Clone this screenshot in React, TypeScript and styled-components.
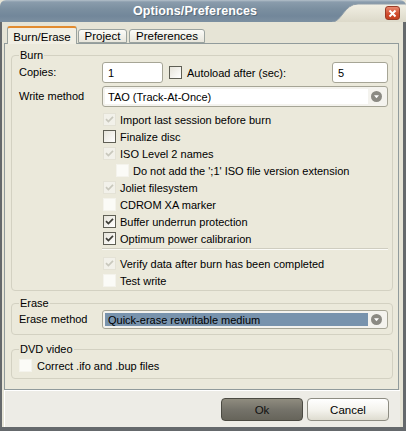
import styled, { createGlobalStyle } from "styled-components";

const GlobalStyle = createGlobalStyle`
  html, body {
    margin: 0;
    padding: 0;
    background: #e6e4d6;
  }
  body {
    font-family: "Liberation Sans", Arial, sans-serif;
    font-size: 11px;
    color: #000;
  }
  * {
    box-sizing: border-box;
  }
`;

const Window = styled.div`
  width: 406px;
  height: 431px;
  display: flex;
  flex-direction: column;
  overflow: hidden;
`;

const TitleBar = styled.div`
  position: relative;
  flex: none;
  height: 22px;
  border-radius: 6px 6px 0 0;
  background: linear-gradient(#b4c0ca 0, #8a9cac 2px, #7b8fa0 9px, #72879a 16px, #7c90a1 22px);
  display: flex;
  align-items: center;
  justify-content: center;
  padding-right: 16px;
  overflow: hidden;
`;

const TitleArt = styled.svg`
  position: absolute;
  top: 0;
  left: 0;
`;

const TitleText = styled.div`
  position: relative;
  font-weight: bold;
  font-size: 12.5px;
  color: #fff;
  text-shadow: 1px 1px 0 #5a6b78;
  letter-spacing: 0.1px;
`;

const CloseButton = styled.div`
  position: absolute;
  top: 6px;
  right: 6px;
  width: 15px;
  height: 14px;
  border-radius: 3px;
  border: 1px solid #9a3b26;
  background: linear-gradient(#e98a70, #d04a2c 60%, #c4401f);
  display: flex;
  align-items: center;
  justify-content: center;
`;

const Frame = styled.div`
  flex: 1;
  display: flex;
  flex-direction: column;
  background: #e6e4d6;
  border-left: 2px solid #65696c;
  border-right: 3px solid #65696c;
  border-bottom: 4px solid #65696c;
  padding: 4px 4px 0 2px;
`;

const TabStrip = styled.div`
  position: relative;
  z-index: 1;
  display: flex;
  align-items: flex-end;
  height: 18px;
  margin-bottom: -1px;
  padding-left: 3px;
`;

const Tab = styled.div<{ $active?: boolean; $w: number }>`
  width: ${(p) => p.$w}px;
  height: ${(p) => (p.$active ? 18 : 14)}px;
  margin-right: ${(p) => (p.$active ? 1 : 2)}px;
  margin-bottom: ${(p) => (p.$active ? 0 : 1)}px;
  display: flex;
  align-items: center;
  justify-content: center;
  padding-top: ${(p) => (p.$active ? 1 : 0)}px;
  border: 1px solid #9ba39f;
  border-bottom: ${(p) => (p.$active ? "none" : "1px solid #9ba39f")};
  border-top: ${(p) => (p.$active ? "2px solid #e28b2f" : "1px solid #9ba39f")};
  border-radius: 3px 3px 0 0;
  background: ${(p) =>
    p.$active ? "#f1efe4" : "linear-gradient(#fbfbf8, #e8e6dc)"};
  font-size: 11.5px;
`;

const Panel = styled.div`
  flex: 1;
  display: flex;
  flex-direction: column;
  gap: 6px;
  border: 1px solid #919b9c;
  background: #ebe9db;
  padding: 5px 5px 0 6px;
`;

const Group = styled.fieldset<{ $bottom?: number; $top?: number }>`
  margin: ${(p) => p.$top ?? 0}px 0 0 0;
  padding: 0 4px ${(p) => p.$bottom ?? 1}px 7px;
  border: 1px solid #d3d1c2;
  border-radius: 4px;
  min-width: 0;
`;

const Legend = styled.legend`
  padding: 0 1px;
  margin-left: 0;
  line-height: 13px;
`;

const FormRow = styled.div<{ $gap?: number }>`
  display: grid;
  grid-template-columns: 83px 1fr;
  align-items: center;
  margin-bottom: ${(p) => p.$gap ?? 0}px;
`;

const Label = styled.span`
  line-height: 13px;
`;

const Controls = styled.div`
  display: flex;
  align-items: center;
`;

const TextInput = styled.div<{ $w: number }>`
  width: ${(p) => p.$w}px;
  height: 21px;
  border: 1px solid #a6a596;
  border-radius: 3px;
  background: #fff;
  padding-left: 5px;
  display: flex;
  align-items: center;
`;

const InlineCheck = styled.label`
  display: flex;
  align-items: center;
  gap: 5px;
  margin-left: 6px;
`;

const Spacer = styled.div`
  flex: 1;
`;

const Select = styled.div<{ $h: number }>`
  flex: 1;
  height: ${(p) => p.$h}px;
  border: 1px solid #a6a596;
  border-radius: 3px;
  background: #f4f3ee;
  display: flex;
  align-items: center;
  padding: 2px;
`;

const SelectValue = styled.div<{ $selected?: boolean }>`
  flex: 1;
  align-self: stretch;
  display: flex;
  align-items: center;
  padding-left: 3px;
  background: ${(p) => (p.$selected ? "#7893ad" : "#fff")};
`;

const Arrow = styled.div`
  width: 17px;
  display: flex;
  align-items: center;
  justify-content: center;
`;

const CheckList = styled.div<{ $top?: number }>`
  padding-left: 84px;
  padding-top: ${(p) => p.$top ?? 0}px;
`;

const CheckRow = styled.label<{ $indent?: number; $gap?: number }>`
  display: flex;
  align-items: center;
  height: 17px;
  gap: ${(p) => p.$gap ?? 4}px;
  padding-left: ${(p) => p.$indent ?? 0}px;
`;

const Box = styled.span<{ $kind: "dark" | "faint" | "dim" }>`
  flex: none;
  width: 13px;
  height: 13px;
  display: flex;
  align-items: center;
  justify-content: center;
  border: 1px solid
    ${(p) =>
      p.$kind === "dark" ? "#5f5f55" : p.$kind === "dim" ? "#e4e2d6" : "#f4f3ec"};
  background: ${(p) =>
    p.$kind === "dark"
      ? "linear-gradient(135deg, #e6e4da, #ffffff)"
      : p.$kind === "dim"
      ? "#f2f1ea"
      : "#fbfbf7"};
`;

const Separator = styled.div`
  margin: 1px 0 5px 83px;
  height: 2px;
  border-top: 1px solid #cfcdc0;
  border-bottom: 1px solid #fbfbf7;
`;

const Footer = styled.div`
  flex: none;
  height: 37px;
  margin-right: -1px;
  background: #edece6;
  border-top: 1px solid #ffffff;
  border-left: 1px solid #ffffff;
  display: flex;
  justify-content: flex-end;
  align-items: flex-start;
  gap: 4px;
  padding: 7px 11px 0 0;
`;

const Button = styled.div<{ $primary?: boolean }>`
  width: 82px;
  height: 23px;
  border-radius: 4px;
  display: flex;
  align-items: center;
  justify-content: center;
  font-size: 11.5px;
  border: 1px solid ${(p) => (p.$primary ? "#4b4a42" : "#8d8c82")};
  background: ${(p) =>
    p.$primary
      ? "linear-gradient(#8f8c7f, #75736a 50%, #66645a)"
      : "linear-gradient(#ffffff, #f3f2ec 55%, #dedcd0)"};
  color: ${(p) => (p.$primary ? "#111" : "#000")};
`;

function Check({ kind, checked }: { kind: "dark" | "faint" | "dim"; checked?: boolean }) {
  return (
    <Box $kind={kind}>
      {checked && (
        <svg width="9" height="9" viewBox="0 0 9 9">
          <path
            d="M1 4.2 L3.4 6.6 L8 1.8"
            fill="none"
            stroke={kind === "dark" ? "#3e3e38" : "#c9c8bd"}
            strokeWidth="1.7"
          />
        </svg>
      )}
    </Box>
  );
}

function DropArrow() {
  return (
    <svg width="11" height="11" viewBox="0 0 11 11">
      <circle cx="5.5" cy="5.5" r="5.5" fill="#8b8a83" />
      <path d="M3 4.2 L8 4.2 L5.5 7.2 Z" fill="#fff" />
    </svg>
  );
}

const burnChecks: { text: string; kind: "dark" | "faint" | "dim"; checked?: boolean; indent?: number }[] = [
  { text: "Import last session before burn", kind: "dim", checked: true },
  { text: "Finalize disc", kind: "dark" },
  { text: "ISO Level 2 names", kind: "dim", checked: true },
  { text: "Do not add the ';1' ISO file version extension", kind: "faint", indent: 13 },
  { text: "Joliet filesystem", kind: "dim", checked: true },
  { text: "CDROM XA marker", kind: "faint" },
  { text: "Buffer underrun protection", kind: "dark", checked: true },
  { text: "Optimum power calibrarion", kind: "dark", checked: true },
];

export default function App() {
  return (
    <>
      <GlobalStyle />
      <Window>
        <TitleBar>
          <TitleArt width="406" height="22" viewBox="0 0 406 22">
            <defs>
              <linearGradient id="cream" x1="0" y1="0" x2="0" y2="1">
                <stop offset="0" stopColor="#f2f0e4" />
                <stop offset="1" stopColor="#dcd9c9" />
              </linearGradient>
            </defs>
            <path d="M332 22 C342 22 344 4 358 4 L406 4 L406 22 Z" fill="url(#cream)" />
            <path d="M332 22 C342 22 344 4 358 4 L406 4" fill="none" stroke="#8e9ca8" strokeWidth="1" />
          </TitleArt>
          <TitleText>Options/Preferences</TitleText>
          <CloseButton>
            <svg width="9" height="9" viewBox="0 0 9 9">
              <path d="M1.5 1.5 L7.5 7.5 M7.5 1.5 L1.5 7.5" stroke="#fff" strokeWidth="2" />
            </svg>
          </CloseButton>
        </TitleBar>
        <Frame>
          <TabStrip>
            <Tab $active $w={70}>Burn/Erase</Tab>
            <Tab $w={49}>Project</Tab>
            <Tab $w={76}>Preferences</Tab>
          </TabStrip>
          <Panel>
            <Group>
              <Legend>Burn</Legend>
              <FormRow $gap={3}>
                <Label>Copies:</Label>
                <Controls>
                  <TextInput $w={61}>1</TextInput>
                  <InlineCheck>
                    <Check kind="dark" />
                    Autoload after (sec):
                  </InlineCheck>
                  <Spacer />
                  <TextInput $w={56}>5</TextInput>
                </Controls>
              </FormRow>
              <FormRow>
                <Label>Write method</Label>
                <Controls>
                  <Select $h={21}>
                    <SelectValue>TAO (Track-At-Once)</SelectValue>
                    <Arrow>
                      <DropArrow />
                    </Arrow>
                  </Select>
                </Controls>
              </FormRow>
              <CheckList $top={4}>
                {burnChecks.map((c) => (
                  <CheckRow key={c.text} $indent={c.indent}>
                    <Check kind={c.kind} checked={c.checked} />
                    {c.text}
                  </CheckRow>
                ))}
              </CheckList>
              <Separator />
              <CheckList>
                <CheckRow>
                  <Check kind="dim" checked />
                  Verify data after burn has been completed
                </CheckRow>
                <CheckRow>
                  <Check kind="faint" />
                  Test write
                </CheckRow>
              </CheckList>
            </Group>
            <Group $bottom={5}>
              <Legend>Erase</Legend>
              <FormRow>
                <Label>Erase method</Label>
                <Controls>
                  <Select $h={19}>
                    <SelectValue $selected>Quick-erase rewritable medium</SelectValue>
                    <Arrow>
                      <DropArrow />
                    </Arrow>
                  </Select>
                </Controls>
              </FormRow>
            </Group>
            <Group $top={2} $bottom={4}>
              <Legend>DVD video</Legend>
              <CheckRow $gap={5} style={{ marginTop: 1 }}>
                <Check kind="faint" />
                Correct .ifo and .bup files
              </CheckRow>
            </Group>
          </Panel>
          <Footer>
            <Button $primary>Ok</Button>
            <Button>Cancel</Button>
          </Footer>
        </Frame>
      </Window>
    </>
  );
}
